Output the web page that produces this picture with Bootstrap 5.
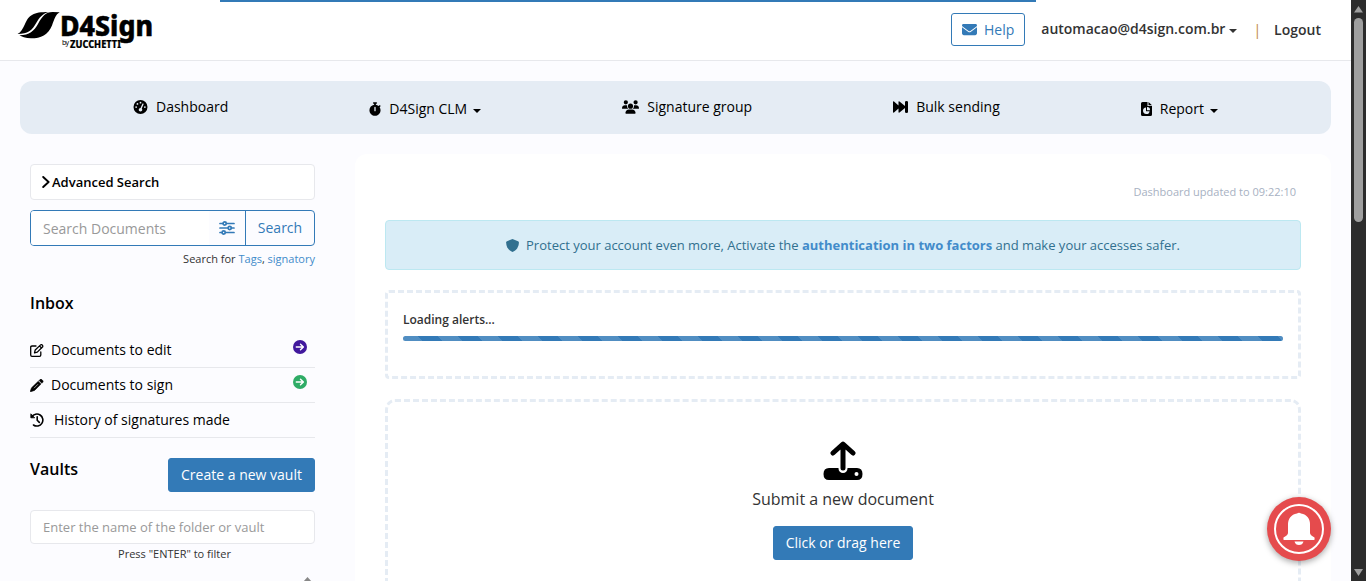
<!DOCTYPE html>
<html lang="en">
<head>
<meta charset="utf-8">
<title>D4Sign</title>
<meta name="viewport" content="width=device-width, initial-scale=1">
<link href="https://cdn.jsdelivr.net/npm/bootstrap@5.3.0/dist/css/bootstrap.min.css" rel="stylesheet">
<style>
  :root { --brand: #337ab7; --line: #e7e8ec; --soft: #e5ecf4; }
  body { font-family: "Open Sans", sans-serif; font-size: 14px; line-height: 20px; color: #333; background: #fcfcff; height: 581px; overflow: hidden; }
  a { text-decoration: none; color: #428bca; }
  svg { display: block; flex: none; }
  svg.ico { fill: currentColor; fill-rule: evenodd; }
  .page-area { width: 1351px; height: 581px; overflow: hidden; }
  .load-line { height: 2px; width: 816px; margin-left: 220px; background: var(--brand); }
  .topbar { height: 61px; background: #fff; border-bottom: 1px solid var(--line); padding: 0 30px 0 17px; }
  .topbar .load-line { position: absolute; top: 0; left: 0; }
  .btn { --bs-btn-font-size: 14px; --bs-btn-line-height: 20px; --bs-btn-border-radius: 3px; --bs-btn-padding-y: 6px; --bs-btn-padding-x: 12px; }
  .btn-brand { --bs-btn-bg: var(--brand); --bs-btn-color: #fff; --bs-btn-border-color: var(--brand); height: 34px; white-space: nowrap; }
  .btn-line { --bs-btn-bg: #fff; --bs-btn-color: var(--brand); --bs-btn-border-color: var(--brand); }
  .arrow-down { width: 0; height: 0; border: 4px solid transparent; border-top-color: currentColor; border-bottom: 0; }
  .mainmenu { height: 53px; margin: 20px 20px 0; padding: 0 113px 0 113px; border-radius: 12px; background: var(--soft); color: #000; }
  .mainmenu a { color: #000; height: 20px; margin-top: 16px; }
  .mainmenu a.drop { margin-top: 18px; }
  .mainmenu .arrow-down { margin-left: 6px; }
  .side { width: 285px; margin-left: 30px; padding-top: 30px; }
  .box { border: 1px solid var(--line); border-radius: 4px; background: #fff; }
  .adv { height: 36px; padding: 0 10px 0 11px; font-size: 13px; font-weight: 600; color: #000; }
  .searchbox { height: 36px; border: 1px solid var(--brand); border-radius: 4px; color: #999; margin-top: 10px; overflow: hidden; }
  .searchbox .go { border-left: 1px solid var(--brand); width: 69px; color: var(--brand); }
  .tiny { font-size: 11px; line-height: 16px; }
  .side h2 { font-size: 16px; font-weight: 600; color: #000; line-height: 22px; margin: 0; }
  .row-link { height: 35px; border-bottom: 1px solid var(--line); color: #000; }
  .main-panel { width: 976px; margin: 20px 0 0 40px; background: #fff; border-radius: 12px; height: 500px; padding: 30px 30px 0; }
  .notice { height: 50px; margin-top: 20px; background: #d9edf7; border: 1px solid #bce8f1; border-radius: 4px; color: #31708f; font-size: 13px; }
  .dashed { border: 3px dashed var(--soft); border-radius: 4px; }
  .progress { --bs-progress-height: 5px; --bs-progress-bg: #f5f5f5; --bs-progress-bar-bg: var(--brand); --bs-progress-border-radius: 4px; }
  .progress-bar-striped { background-size: 40px 40px; background-position: -5px 0; }
  .scroller { width: 15px; height: 581px; background: #2c2c2c; padding: 6px 0 5px; }
  .scroller .thumb { width: 9px; height: 204px; border-radius: 5px; background: #9f9f9f; margin-top: 5px; }
  .bell { position: absolute; left: 1267px; top: 497px; width: 64px; height: 64px; border-radius: 50%; background: #e54b4d; box-shadow: 0 2px 6px rgba(0,0,0,.35); }
</style>
</head>
<body class="d-flex">
<div class="page-area">
  <header class="topbar d-flex align-items-start position-relative">
    <div class="load-line"></div>
    <svg width="140" height="52" viewBox="17 0 140 52" role="img" aria-label="D4Sign by Zucchetti">
      <path d="M17.500 34C21 32.500 22.500 29 25 24C29 15 33 12 48.500 12C42 14 39.500 17.500 36.500 22.500C32 30.500 28 34 17.500 34Z"/>
      <path d="M59.700 12.300C55.500 14.500 54.500 19 52 25.500C48 35 41 38.300 31 38.300C25.500 38.300 21.500 36.800 19.500 35.300C29.500 35 34 31 38 24C42.500 16 45.500 12.300 52.500 12.100Z"/>
      <text x="60" y="36" font-family="Noto Sans, sans-serif" font-weight="800" font-size="28" stroke="#000" stroke-width=".5" textLength="93" lengthAdjust="spacingAndGlyphs">D4Sign</text>
      <text x="62" y="45" font-family="Noto Sans, sans-serif" font-size="7" textLength="7">by</text>
      <text x="70" y="48" font-family="Noto Sans, sans-serif" font-weight="800" font-size="10" textLength="51" lengthAdjust="spacingAndGlyphs" stroke="#000" stroke-width=".2">ZUCCHETTI</text>
    </svg>
    <div class="d-flex ms-auto">
      <a class="btn btn-line d-flex align-items-center" style="margin-top:13px;height:33px;width:74px;padding:0 10px" href="#">
        <svg class="ico" width="15" height="15" viewBox="0 0 512 512"><path d="M48 64C21.500 64 0 85.500 0 112c0 15.100 7.100 29.300 19.200 38.400L236.800 313.600c11.400 8.500 27 8.500 38.400 0L492.800 150.400c12.100-9.100 19.200-23.300 19.200-38.400c0-26.500-21.500-48-48-48H48zM0 176V384c0 35.300 28.700 64 64 64H448c35.300 0 64-28.700 64-64V176L294.400 339.200c-22.800 17.100-54 17.100-76.800 0L0 176z"/></svg>
        <span class="ms-auto">Help</span>
      </a>
      <div class="d-flex align-items-center" style="height:20px;margin:19px 0 0 16px;font-weight:600"><span>automacao@d4sign.com.br</span><i class="arrow-down ms-1 mt-1"></i></div>
      <div style="margin:20px 0 0 16px;color:#c08a3e">|</div>
      <div style="margin:20px 0 0 13px;font-weight:600">Logout</div>
    </div>
  </header>

  <nav class="mainmenu d-flex justify-content-between">
    <a href="#" class="d-flex align-items-center"><svg class="ico me-2" width="15" height="14" viewBox="0 0 512 512"><path d="M0 256a256 256 0 1 1 512 0A256 256 0 1 1 0 256zM288 96a32 32 0 1 0 -64 0 32 32 0 1 0 64 0zM256 416c35.300 0 64-28.700 64-64c0-17.400-6.900-33.100-18.100-44.600L366 161.700c5.300-12.100-.2-26.300-12.300-31.600s-26.300 .2-31.600 12.300L257.900 288c-.6 0-1.300 0-1.900 0c-35.300 0-64 28.700-64 64s28.700 64 64 64zM176 144a32 32 0 1 0 -64 0 32 32 0 1 0 64 0zM96 288a32 32 0 1 0 0-64 32 32 0 1 0 0 64zm352-32a32 32 0 1 0 -64 0 32 32 0 1 0 64 0z"/></svg>Dashboard</a>
    <a href="#" class="drop d-flex align-items-center"><svg class="ico me-2" width="12" height="14" viewBox="0 0 448 512"><path d="M176 0c-17.700 0-32 14.300-32 32s14.300 32 32 32h16V98.400C92.300 113.800 16 200 16 304c0 114.900 93.100 208 208 208s208-93.100 208-208c0-41.800-12.300-80.700-33.500-113.200l24.100-24.100c12.500-12.500 12.500-32.800 0-45.300s-32.800-12.500-45.300 0L355.700 143c-28.100-23-62.200-38.800-99.700-44.600V64h16c17.700 0 32-14.300 32-32s-14.300-32-32-32H176zm72 192V320c0 13.300-10.700 24-24 24s-24-10.700-24-24V192c0-13.300 10.700-24 24-24s24 10.700 24 24z"/></svg>D4Sign CLM<i class="arrow-down mt-1"></i></a>
    <a href="#" class="d-flex align-items-center"><svg class="ico me-2" width="17" height="14" viewBox="0 0 640 512"><path d="M144 0a80 80 0 1 1 0 160A80 80 0 1 1 144 0zM512 0a80 80 0 1 1 0 160A80 80 0 1 1 512 0zM0 298.700C0 239.800 47.800 192 106.700 192h42.700c15.900 0 31 3.500 44.600 9.700c-1.300 7.200-1.900 14.700-1.900 22.300c0 38.200 16.800 72.500 43.300 96H21.300C9.600 320 0 310.400 0 298.700zM405.300 320c26.600-23.500 43.300-57.800 43.300-96c0-7.600-.7-15-1.900-22.300c13.600-6.300 28.700-9.700 44.600-9.700h42.700C592.200 192 640 239.800 640 298.700c0 11.800-9.600 21.300-21.300 21.300H405.300zM224 224a96 96 0 1 1 192 0 96 96 0 1 1 -192 0zM128 485.300C128 411.700 187.700 352 261.300 352H378.700C452.300 352 512 411.700 512 485.300c0 14.700-11.900 26.700-26.700 26.700H154.700c-14.700 0-26.700-11.900-26.700-26.700z"/></svg>Signature group</a>
    <a href="#" class="d-flex align-items-center"><svg class="ico me-2" width="15" height="12" viewBox="0 0 15 12"><path d="M0 1Q0 0 1 .5L5.500 4.500V1Q5.500 0 6.500 .5L12 5V1Q12 0 13.500 0T15 1V11Q15 12 13.500 12T12 11V7L6.500 11.500Q5.500 12 5.500 11V7.500L1 11.500Q0 12 0 11Z"/></svg>Bulk sending</a>
    <a href="#" class="drop d-flex align-items-center"><svg class="ico me-2" width="11" height="14" viewBox="0 0 11 14"><path d="M0 1.500Q0 0 1.500 0H6.500V4H11V12.500Q11 14 9.500 14H1.500Q0 14 0 12.500ZM7.500 0L11 3.200H7.500ZM5 5.500A3.300 3.300 0 1 0 8.600 9.200H5ZM6 5V8.200H9A3 3 0 0 0 6 5Z"/></svg>Report<i class="arrow-down mt-1"></i></a>
  </nav>

  <div class="d-flex">
    <aside class="side flex-shrink-0">
      <div class="box adv d-flex align-items-center"><svg width="8" height="12" viewBox="0 0 8 12" style="margin-right:2px" fill="none" stroke="#000" stroke-width="1.900" stroke-linecap="round" stroke-linejoin="round"><path d="M1.200 1L6.600 6L1.200 11"/></svg>Advanced Search</div>
      <div class="searchbox d-flex align-items-stretch">
        <div class="bg-white d-flex align-items-center flex-grow-1" style="padding:1px 0 0 12px">Search Documents</div>
        <div class="d-flex align-items-center" style="padding:0 10px"><svg width="16" height="14" viewBox="0 0 16 14" fill="none" stroke="#337ab7" stroke-width="1.700" stroke-linecap="round"><path d="M1 2.500H4M7.500 2.500H15M1 7H9M12.500 7H15M1 11.500H3M6.500 11.500H15"/><circle cx="5.700" cy="2.500" r="1.600"/><circle cx="10.700" cy="7" r="1.600"/><circle cx="4.700" cy="11.500" r="1.600"/></svg></div>
        <div class="go d-flex align-items-center justify-content-center">Search</div>
      </div>
      <div class="tiny text-end" style="margin-top:5px">Search for <a href="#">Tags</a>, <a href="#">signatory</a></div>
      <h2 style="margin-top:25px">Inbox</h2>
      <div style="margin-top:19px">
        <div class="row-link d-flex align-items-center"><svg width="14" height="13" viewBox="0 0 14 13" fill="none" stroke="#000" stroke-width="1.300" stroke-linejoin="round" stroke-linecap="round"><path d="M6 2H2Q.7 2 .7 3.300V11Q.7 12.300 2 12.300H9.500Q10.800 12.300 10.800 11V8M4.500 8.800L5.200 6L10.600 .9Q11.400 .3 12.200 1T12.700 2.700L7.300 8.100ZM9.500 2L11.600 4.100"/></svg><span style="margin-left:7px">Documents to edit</span>
          <svg class="ms-auto" style="margin:-6px 8px 0 0" width="14" height="14" viewBox="0 0 14 14"><circle cx="7" cy="7" r="7" fill="#41189d"/><path d="M3.300 7H10.300M7.500 4.200L10.400 7L7.500 9.800" fill="none" stroke="#fff" stroke-width="1.400" stroke-linecap="round" stroke-linejoin="round"/></svg></div>
        <div class="row-link d-flex align-items-center"><svg width="14" height="13" viewBox="0 0 14 13"><path d="M8.200 2.300L11 5.100L4.600 11.400L.8 12.700Q0 13 .3 12.100L1.500 8.800ZM9 1.500L10 .5Q10.800-.3 11.800 .6L12.800 1.600Q13.500 2.500 12.800 3.300L11.800 4.300Z" stroke="#000" stroke-width=".5"/><path d="M4 9.200L8 5.200" stroke="#fff" stroke-width=".6"/></svg><span style="margin-left:7px">Documents to sign</span>
          <svg class="ms-auto" style="margin:-6px 8px 0 0" width="14" height="14" viewBox="0 0 14 14"><circle cx="7" cy="7" r="7" fill="#2fac66"/><path d="M3.300 7H10.300M7.500 4.200L10.400 7L7.500 9.800" fill="none" stroke="#fff" stroke-width="1.400" stroke-linecap="round" stroke-linejoin="round"/></svg></div>
        <div class="row-link d-flex align-items-center"><svg width="14" height="14" viewBox="0 0 14 14" fill="none" stroke="#000" stroke-width="1.600" stroke-linecap="round" stroke-linejoin="round"><path d="M1.800 3.800A6 6 0 1 1 3.500 12M7.200 3.800V7.300L9.300 9.400"/><path d="M.8 1.200V4.800H4.400Z" fill="#000" stroke-width=".8"/></svg><span style="margin-left:10px">History of signatures made</span></div>
      </div>
      <div class="d-flex justify-content-between" style="margin-top:20px"><h2>Vaults</h2><a href="#" class="btn btn-brand" style="width:147px;padding-left:0;padding-right:0">Create a new vault</a></div>
      <div class="box d-flex align-items-center" style="height:34px;margin-top:18px;padding-left:12px;font-size:13px;color:#999">Enter the name of the folder or vault</div>
      <div class="tiny text-center" style="margin-top:2px;padding-left:4px">Press "ENTER" to filter</div>
      <div class="d-flex justify-content-end" style="margin-top:15px;padding-right:3px"><svg width="9" height="5" viewBox="0 0 9 5" fill="#888"><path d="M4.500 0L9 5H0Z"/></svg></div>
    </aside>

    <main class="main-panel flex-shrink-0">
      <div class="tiny text-end" style="color:#a7b1c2;padding-right:5px">Dashboard updated to 09:22:10</div>
      <div class="notice d-flex align-items-center justify-content-center"><svg class="ico" style="margin-right:7px" width="13" height="13" viewBox="0 0 13 13"><path d="M6.500 0L12 2.200Q12.900 2.600 12.900 3.500C12.700 8 10.500 11.500 6.500 13C2.500 11.500 .3 8 .1 3.500Q.1 2.600 1 2.200Z"/></svg><span>Protect your account even more, Activate the <a href="#" class="fw-bold">authentication in two factors</a> and make your accesses safer.</span></div>
      <section class="dashed" style="height:89px;margin-top:20px;padding:17px 15px 0">
        <div style="font-size:12px;line-height:20px;font-weight:600">Loading alerts...</div>
        <div class="progress" style="margin-top:6px"><div class="progress-bar progress-bar-striped w-100"></div></div>
      </section>
      <section class="dashed d-flex flex-column align-items-center" style="height:260px;margin-top:20px;padding-top:39px;border-radius:10px">
        <svg width="40" height="40" viewBox="0 0 40 40"><path d="M6 27H15.500V27.500A4.500 4.500 0 0 0 24.500 27.500V27H34Q39.500 27 39.500 33T34 39H6Q.5 39 .5 33T6 27Z"/><path d="M20 27V4M10 12L20 3L30 12" fill="none" stroke="#000" stroke-width="5" stroke-linecap="round" stroke-linejoin="round"/><circle cx="33.500" cy="33" r="2" fill="#fff"/></svg>
        <div style="font-size:16px;line-height:22px;margin-top:7px">Submit a new document</div>
        <a href="#" class="btn btn-brand" style="width:140px;margin-top:16px;padding-left:0;padding-right:0">Click or drag here</a>
      </section>
    </main>
  </div>
</div>
<div class="scroller d-flex flex-column align-items-center">
  <svg width="9" height="7" viewBox="0 0 9 7" fill="#9f9f9f"><path d="M4.500 0L9 6.500H0Z"/></svg>
  <div class="thumb"></div>
  <svg class="mt-auto" width="9" height="7" viewBox="0 0 9 7" fill="#9f9f9f"><path d="M0 0H9L4.500 7Z"/></svg>
</div>
<div class="bell"><svg width="64" height="64" viewBox="0 0 64 64"><circle cx="32" cy="32" r="24" fill="none" stroke="#fff" stroke-width="2"/><path fill="#fff" d="M30 16.500Q32 15 34 16.500C40 17.500 43 22 43 27V36Q43 38 47.500 40.500Q48 43 47 43H17Q16 43 16.500 40.500Q21 38 21 36V27C21 22 24 17.500 30 16.500ZM27.500 44.500H36.500Q35.500 48 32 48T27.500 44.500Z"/></svg></div>
<script src="https://cdn.jsdelivr.net/npm/bootstrap@5.3.0/dist/js/bootstrap.bundle.min.js"></script>
</body>
</html>
